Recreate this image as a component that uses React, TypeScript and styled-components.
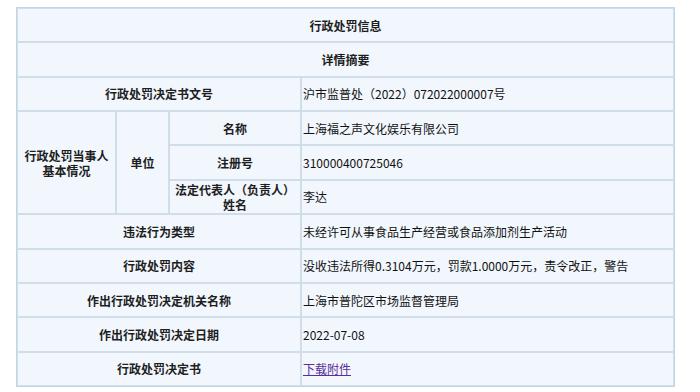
import React from "react";
import styled, { createGlobalStyle } from "styled-components";

const GlobalStyle = createGlobalStyle`
  html, body {
    margin: 0;
    padding: 0;
    background: #ffffff;
  }
  body {
    font-family: "SimSun", "Noto Sans CJK SC", sans-serif;
    font-size: 12px;
    color: #222222;
  }
`;

const Page = styled.div`
  padding: 7px 0 0 16px;
`;

const Table = styled.table`
  width: 659px;
  table-layout: fixed;
  border-collapse: separate;
  border-spacing: 0;
  border: 1px solid #c3d6e1;
  background: #f2f7fd;
`;

const Cell = styled.td<{ $head?: boolean; $left?: boolean }>`
  box-sizing: border-box;
  height: 34.36px;
  padding: ${(p) => (p.$left ? "0 0 0 1px" : "0 2px")};
  border: 1px solid #cfdee8;
  text-align: ${(p) => (p.$left ? "left" : "center")};
  vertical-align: middle;
  font-weight: ${(p) => (p.$head ? 700 : 400)};
  color: ${(p) => (p.$head ? "#1e1e1e" : "#111111")};
  line-height: 15px;
  white-space: nowrap;
`;

const Link = styled.a`
  color: #5a2c9c;
  text-decoration: underline;
  cursor: pointer;
`;

type Row = { label: string; value: React.ReactNode };

const rows: Row[] = [
  { label: "违法行为类型", value: "未经许可从事食品生产经营或食品添加剂生产活动" },
  { label: "行政处罚内容", value: "没收违法所得0.3104万元，罚款1.0000万元，责令改正，警告" },
  { label: "作出行政处罚决定机关名称", value: "上海市普陀区市场监督管理局" },
  { label: "作出行政处罚决定日期", value: "2022-07-08" },
  { label: "行政处罚决定书", value: <Link>下载附件</Link> },
];

export default function App() {
  return (
    <>
      <GlobalStyle />
      <Page>
        <Table>
          <colgroup>
            <col style={{ width: 99 }} />
            <col style={{ width: 53 }} />
            <col style={{ width: 132 }} />
            <col />
          </colgroup>
          <tbody>
            <tr>
              <Cell $head colSpan={4}>行政处罚信息</Cell>
            </tr>
            <tr>
              <Cell $head colSpan={4}>详情摘要</Cell>
            </tr>
            <tr>
              <Cell $head colSpan={3}>行政处罚决定书文号</Cell>
              <Cell $left>沪市监普处（2022）072022000007号</Cell>
            </tr>
            <tr>
              <Cell $head rowSpan={3}>
                行政处罚当事人
                <br />
                基本情况
              </Cell>
              <Cell $head rowSpan={3}>单位</Cell>
              <Cell $head>名称</Cell>
              <Cell $left>上海福之声文化娱乐有限公司</Cell>
            </tr>
            <tr>
              <Cell $head>注册号</Cell>
              <Cell $left>310000400725046</Cell>
            </tr>
            <tr>
              <Cell $head>
                法定代表人（负责人）
                <br />
                姓名
              </Cell>
              <Cell $left>李达</Cell>
            </tr>
            {rows.map((r) => (
              <tr key={r.label}>
                <Cell $head colSpan={3}>{r.label}</Cell>
                <Cell $left>{r.value}</Cell>
              </tr>
            ))}
          </tbody>
        </Table>
      </Page>
    </>
  );
}
